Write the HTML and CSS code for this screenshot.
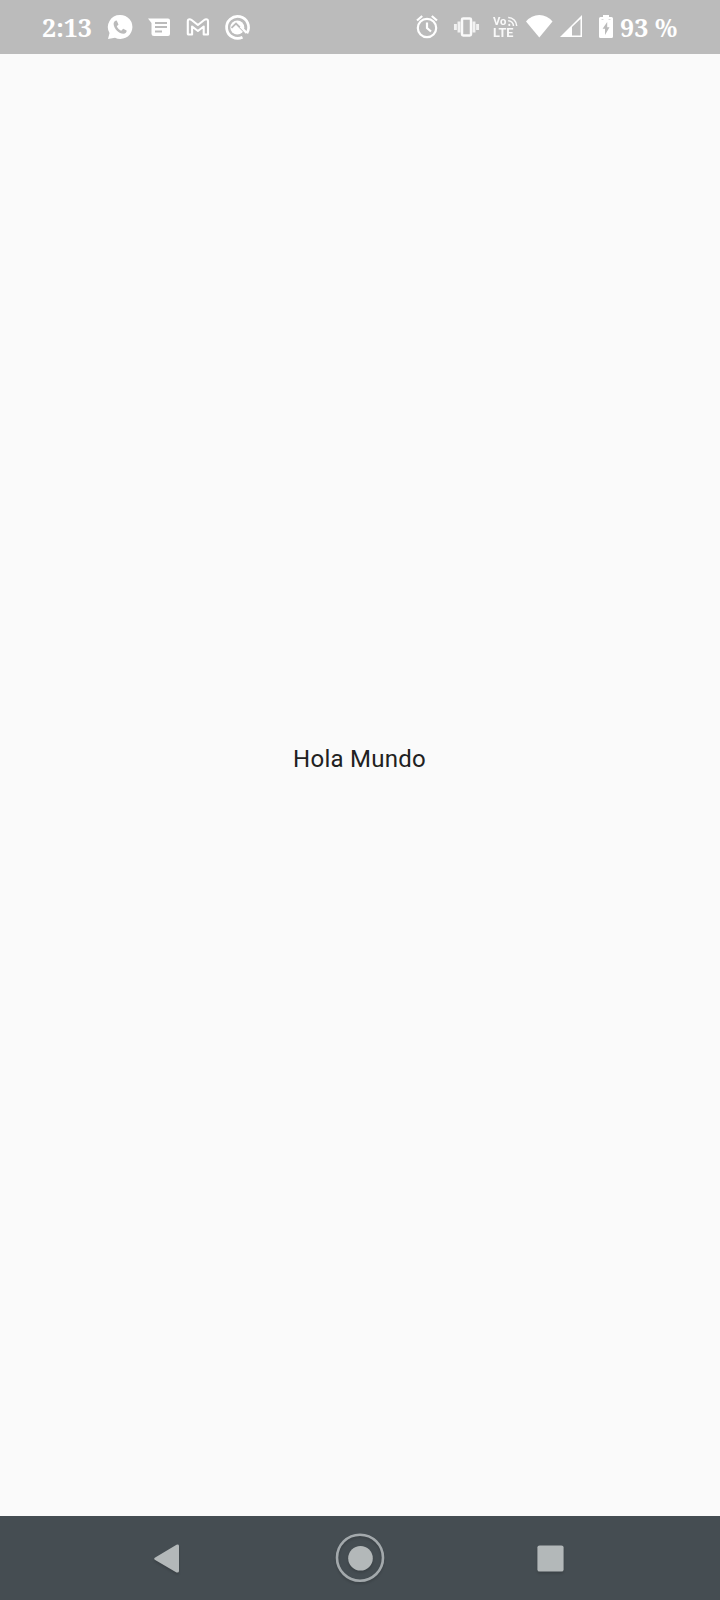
FILE: index.html
```html
<!DOCTYPE html>
<html lang="es">
<head>
<meta charset="utf-8">
<title>Hola Mundo</title>
<link rel="stylesheet" href="styles.css">
</head>
<body>
<header class="status">
  <div class="group">
    <span class="time">2:13</span>
    <svg width="24" height="24" viewBox="0 0 24 24"><path fill="#fff" d="M12 0a12 12 0 1 1-5 22.700L0 24l1.500-6A12 12 0 0 1 12 0Z"/><path fill="#bbb" d="M8.700 5.500C7 5.500 5.500 7.200 5.600 9c.3 5 5.400 9.700 9.900 9.700 1.900 0 3.400-1.600 3.100-3.200l-3.400-1.800-2 2c-1.800-.7-3.600-2.500-4.400-4.400l1.700-1.800Z"/></svg>
    <svg width="22" height="18" viewBox="0 0 22 18"><path fill="#fff" d="M0 .5h20q2 0 2 2V16q0 2-2 2H6q-2.500 0-2.500-2V5Z"/><path stroke="#bbb" stroke-width="1.900" d="M7 5h12M7 9h12M7 13.500h7"/></svg>
    <svg width="23" height="18" viewBox="0 0 23 18"><path fill="none" stroke="#fff" stroke-width="2.100" stroke-linejoin="round" d="M1.800 3.200Q1.800 1.200 3.600 1.200q1 0 2 .8l6.300 5 6.300-5q1-.8 2-.8 1.800 0 1.800 2V16.500h-4.300V8.500l-5.800 4.500-5.800-4.500v8H2.600q-.8 0-.8-.8Z"/></svg>
    <svg width="25" height="25" viewBox="0 0 25 25"><path fill="none" stroke="#fff" stroke-width="2.700" d="M17.500 22.200A11 11 0 1 1 21.900 18.200"/><circle cx="12.300" cy="12.500" r="7" fill="#fff"/><path fill="none" stroke="#bbb" stroke-width="1.800" d="m6.500 12.800 4.500-4.300 7.500 7.500"/><path stroke="#fff" stroke-width="2.400" d="m15.500 11.500 6.200 6.500"/></svg>
  </div>
  <div class="group system">
    <svg width="24" height="24" viewBox="0 0 24 24"><g fill="none" stroke="#fff" stroke-width="2.200"><circle cx="12" cy="13" r="9.200"/><path d="M2 5.500 7.200 1M22 5.500 16.800 1M12 7.500V13l4 3.500"/></g></svg>
    <svg class="vibrate" width="25" height="20" viewBox="0 0 25 20"><path fill="none" stroke="#fff" stroke-opacity=".8" stroke-width="2.900" d="M1.400 7v6M5 4.500v11M20 4.500v11M23.600 7v6"/><rect x="8" y="1.500" width="9" height="17" rx="1.200" fill="none" stroke="#fff" stroke-opacity=".92" stroke-width="2.500"/></svg>
    <div class="volte">
      <svg width="25" height="11" viewBox="0 0 25 11"><text x="0" y="9" font-size="11.500" textLength="13.500" lengthAdjust="spacingAndGlyphs">Vo</text><path fill="none" stroke="#fff" stroke-width="1.500" d="M15.200 1.500a8.500 8.500 0 0 1 8.500 8.500M15.200 4.700a5.300 5.300 0 0 1 5.300 5.300"/><circle cx="16.300" cy="8.900" r="1.100"/></svg>
      <svg width="25" height="11" viewBox="0 0 25 11"><text x="0" y="9.800" font-size="12" textLength="20.500" lengthAdjust="spacingAndGlyphs">LTE</text></svg>
    </div>
    <svg class="wifi" width="27" height="23" viewBox="0 0 27 23"><path fill="#fff" d="M0 6.500Q5.500 0 13.300 0T26.500 6.500L13.300 22.500Z"/></svg>
    <svg class="signal" width="23" height="23" viewBox="0 0 23 23"><path fill="#fff" fill-rule="evenodd" d="M0 22 22 0v22ZM12 12v8.500h8.500V4Z"/></svg>
    <svg class="battery" width="14" height="23" viewBox="0 0 14 23"><path fill="#fff" d="M4 0h6v2h2.500Q14 2 14 3.500v18q0 1.500-1.500 1.500h-11Q0 23 0 21.500v-18Q0 2 1.500 2H4Z"/><path fill="#bbb" d="M8.200 7v5.300h2.300L6 20v-6.200H3.600Z"/><path stroke="#d0d0d0" stroke-width=".8" d="M2.500 4.500h2M9.500 4.500h2"/></svg>
    <span class="level">93 %</span>
  </div>
</header>
<main class="content">Hola Mundo</main>
<nav class="nav">
  <svg class="back" width="25" height="30" viewBox="0 0 25 30"><path d="M1.200 13.500 22.500 .7Q25 0 25 2v25q0 2-2.500 1.500L1.200 16Q-.8 14.700 1.200 13.500Z"/></svg>
  <svg class="home" width="50" height="50" viewBox="0 0 50 50"><circle cx="25" cy="24.700" r="23" fill="none" stroke="#a3a9ac" stroke-width="2.600"/><circle cx="25.500" cy="25.300" r="12.300"/></svg>
  <svg width="27" height="27" viewBox="0 0 27 27"><rect x=".4" y=".4" width="26.200" height="26.200" rx="2.200"/></svg>
</nav>
</body>
</html>
```
FILE: styles.css
```css
body {
  margin: 0;
  height: 1600px;
  display: flex;
  flex-direction: column;
  background: #fafafa;
  font-family: Roboto, sans-serif;
}

svg { display: block; flex: none; overflow: visible; }

.status {
  height: 54px;
  flex: none;
  display: flex;
  box-sizing: border-box;
  padding-left: 42px;
  background: #bbb;
  color: #fff;
}

.group { display: flex; align-items: center; gap: 16px; }

.time, .level {
  font: bold 25px/56px "Noto Serif", serif;
  white-space: nowrap;
}
.time { width: 50px; }

.system { flex: none; margin-left: auto; width: 305px; gap: 0; }
.vibrate { margin-left: 15px; }
.volte {
  flex: none;
  margin: 0 8px 0 14px;
  fill: #fff;
  opacity: .92;
  font-family: Roboto, sans-serif;
  font-weight: bold;
}
.wifi, .signal, .battery { margin-bottom: 2px; }
.signal { margin-left: 7px; }
.battery { margin-left: 16px; }
.level { margin-left: 7px; }

.content {
  flex: 1;
  display: flex;
  align-items: center;
  justify-content: center;
  padding: 0 1px 52px 0;
  font-size: 24px;
  letter-spacing: .25px;
  color: #212121;
}

.nav {
  height: 84px;
  flex: none;
  box-sizing: border-box;
  display: flex;
  align-items: center;
  padding-left: 154px;
  background: #454d52;
}
.nav svg { fill: #b3b8b9; filter: drop-shadow(0 2px 1px rgba(0, 0, 0, .15)); }
.nav .back { margin-top: 2px; }
.nav .home { margin: 0 152px 0 156px; }
```
